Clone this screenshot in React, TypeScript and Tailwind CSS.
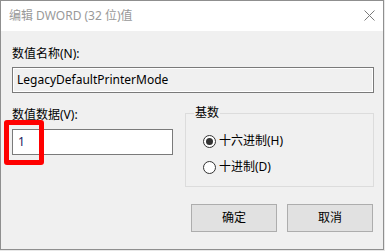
import React from 'react';

const font = { fontFamily: '"Segoe UI", "Noto Sans", "Noto Sans CJK SC", sans-serif' };

const Radio: React.FC<{ checked?: boolean; label: string }> = ({ checked, label }) => (
  <label className="flex h-[16px] items-center gap-[3px] text-[12px] leading-[16px] text-black">
    <span className="flex h-[13px] w-[13px] items-center justify-center rounded-full border border-[#333333] bg-white">
      {checked && <span className="h-[7px] w-[7px] rounded-full bg-[#333333]" />}
    </span>
    <span>{label}</span>
  </label>
);

export default function App() {
  return (
    <div className="h-[251px] w-[385px] bg-[#e8e8e8]" style={font}>
      <div className="relative flex h-[250px] w-[384px] flex-col border border-[#8f8f8f] bg-[#f0f0f0]">
        {/* title bar */}
        <div className="flex h-[30px] items-center justify-between bg-white pl-[8px] pr-[8px]">
          <span className="text-[12px] text-[#999999]">编辑 DWORD (32 位)值</span>
          <svg width="11" height="11" viewBox="0 0 11 11" className="mt-[-1px]">
            <path d="M0.5 0.5 L10.5 10.5 M10.5 0.5 L0.5 10.5" stroke="#7a7a7a" strokeWidth="1" />
          </svg>
        </div>

        <div className="flex flex-col pl-[11px] pr-[9px]">
          <div className="mt-[15px] text-[12px] leading-[16px] text-black">数值名称(N):</div>
          <div className="mt-[5px] flex h-[26px] items-center border border-[#7a7a7a] bg-[#f0f0f0] shadow-[inset_0_0_0_1px_#ffffff] pl-[4px] text-[12px] text-black">
            LegacyDefaultPrinterMode
          </div>

          <div className="mt-[14px] flex">
            <div className="flex w-[161px] flex-col">
              <div className="text-[12px] leading-[16px] text-black">数值数据(V):</div>
              <div className="mt-[6px] flex h-[26px] items-center border border-[#7a7a7a] bg-white pl-[5px] text-[12px] text-[#1a1a60]">
                1
              </div>
            </div>

            <fieldset className="ml-[12px] mt-[-2px] h-[82px] w-[189px] border border-[#dcdcdc] pl-[8px]">
              <legend className="px-[1px] text-[12px] leading-[16px] text-black">基数</legend>
              <div className="mt-[12px] flex flex-col gap-[10px] pl-[9px]">
                <Radio checked label="十六进制(H)" />
                <Radio label="十进制(D)" />
              </div>
            </fieldset>
          </div>

          <div className="mt-[17px] flex justify-end gap-[10px] pr-[1px]">
            <button className="h-[28px] w-[86px] border border-[#adadad] bg-[#e1e1e1] text-[12px] text-black">确定</button>
            <button className="h-[28px] w-[86px] border border-[#adadad] bg-[#e1e1e1] text-[12px] text-black">取消</button>
          </div>
        </div>

        {/* red highlight annotation */}
        <div className="absolute left-[3px] top-[119px] h-[45px] w-[40px] rounded-[3px] border-[5px] border-[#ff0000]" />
      </div>
    </div>
  );
}
